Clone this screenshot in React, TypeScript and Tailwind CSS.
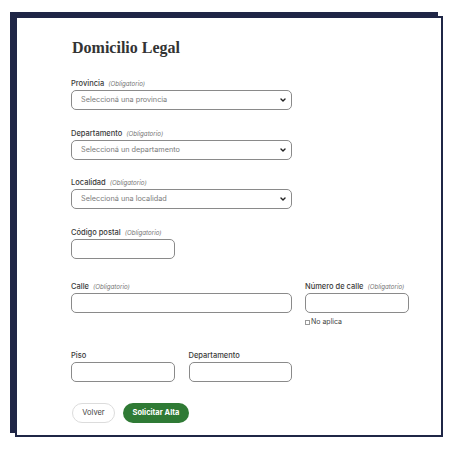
import React from 'react';

const navy = '#1f2646';

function Label({ text, required }: { text: string; required?: boolean }) {
  return (
    <div className="h-[10px] leading-[10px] mb-[5px] whitespace-nowrap">
      <span className="text-[7.5px] font-medium text-[#3a3a3a]">{text}</span>
      {required && (
        <span className="ml-[4px] text-[6.2px] italic text-[#777]">(Obligatorio)</span>
      )}
    </div>
  );
}

function Select({ placeholder }: { placeholder: string }) {
  return (
    <div className="h-[20px] w-[221px] rounded-[5px] border border-[#8a8a8a] flex items-center justify-between pl-[9px] pr-[5px]">
      <span className="text-[7.3px] text-[#7a7a7a]">{placeholder}</span>
      <svg width="6" height="4" viewBox="0 0 6 4" fill="none">
        <path d="M1 0.9 L3 2.9 L5 0.9" stroke="#222" strokeWidth="1.4" strokeLinecap="round" strokeLinejoin="round" />
      </svg>
    </div>
  );
}

function Input({ className = '' }: { className?: string }) {
  return <div className={`h-[20px] rounded-[5px] border border-[#8a8a8a] ${className}`} />;
}

export default function App() {
  return (
    <div className="w-[457px] h-[451px] bg-white pt-[16px] pl-[15px]" style={{ fontFamily: 'Inter, "Open Sans", sans-serif' }}>
      <div
        className="w-[428px] h-[421px] bg-white border-2 pt-[20px] pl-[54px]"
        style={{ borderColor: navy, boxShadow: `-5px -4px 0 ${navy}` }}
      >
        <h1
          className="h-[20px] leading-[20px] text-[16px] font-bold text-[#333] pl-[1px]"
          style={{ fontFamily: '"Liberation Serif", serif' }}
        >
          Domicilio Legal
        </h1>

        <div className="mt-[17px]">
          <Label text="Provincia" required />
          <Select placeholder="Seleccioná una provincia" />
        </div>

        <div className="mt-[15px]">
          <Label text="Departamento" required />
          <Select placeholder="Seleccioná un departamento" />
        </div>

        <div className="mt-[14px]">
          <Label text="Localidad" required />
          <Select placeholder="Seleccioná una localidad" />
        </div>

        <div className="mt-[15px]">
          <Label text="Código postal" required />
          <Input className="w-[104px]" />
        </div>

        <div className="mt-[19px] grid grid-cols-[104px_103px_104px] gap-x-[13.5px] items-start">
          <div className="col-span-2">
            <Label text="Calle" required />
            <Input className="w-full" />
          </div>
          <div>
            <Label text="Número de calle" required />
            <Input className="w-full" />
            <label className="mt-[4px] h-[10px] flex items-center gap-[1px] text-[7px] text-[#444]">
              <span className="w-[5px] h-[5px] border border-[#999] inline-block" />
              No aplica
            </label>
          </div>
        </div>

        <div className="mt-[20px] grid grid-cols-[104px_103px_104px] gap-x-[13.5px] items-start">
          <div>
            <Label text="Piso" />
            <Input className="w-full" />
          </div>
          <div>
            <Label text="Departamento" />
            <Input className="w-full" />
          </div>
        </div>

        <div className="mt-[21px] flex gap-[8px] pl-[1px]">
          <button className="h-[20px] w-[43px] rounded-full border border-[#dcdcdc] text-[7.5px] font-normal text-[#444]">
            Volver
          </button>
          <button className="h-[20px] w-[66px] rounded-full bg-[#2f7a35] text-[7.5px] font-bold text-white">
            Solicitar Alta
          </button>
        </div>
      </div>
    </div>
  );
}
